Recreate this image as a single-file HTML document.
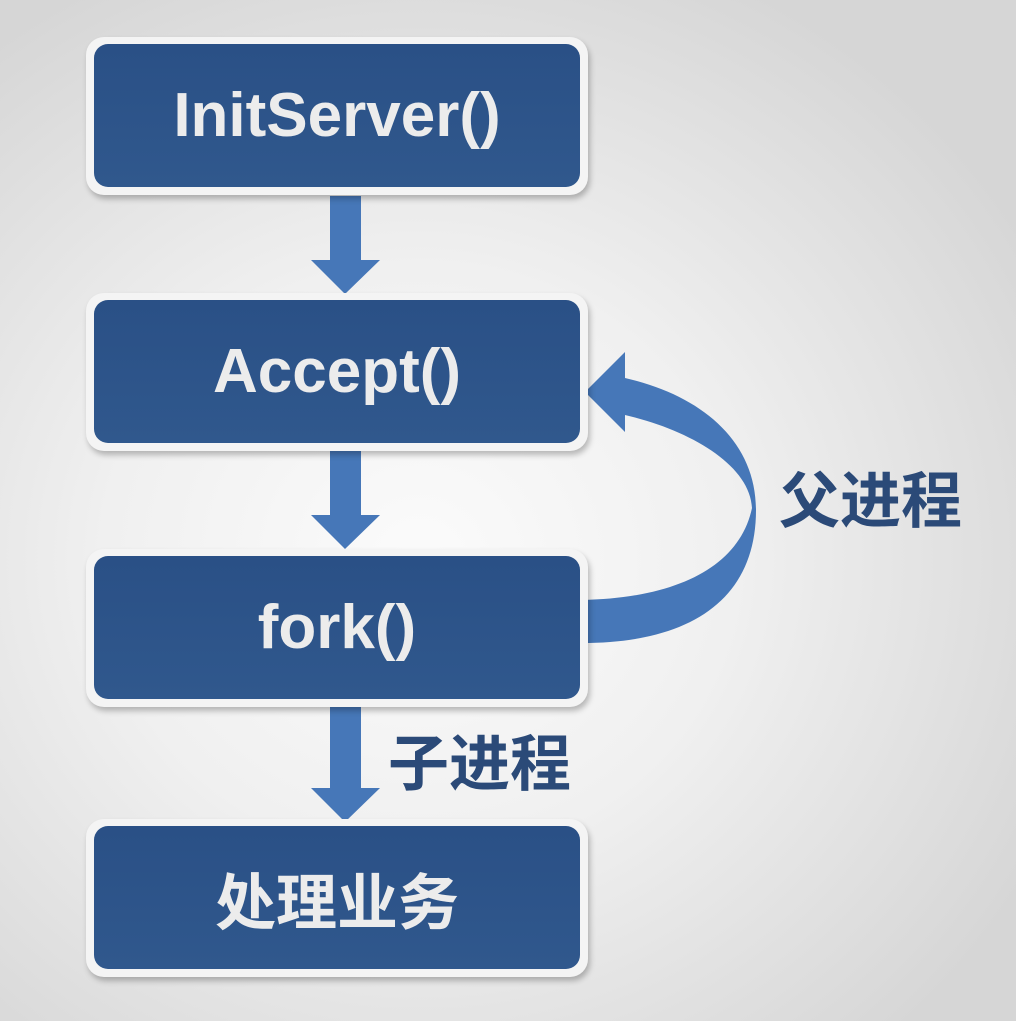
<!DOCTYPE html>
<html><head><meta charset="utf-8"><style>
html,body{margin:0;padding:0}
body{width:1016px;height:1021px;position:relative;overflow:hidden;
background:radial-gradient(ellipse 700px 650px at 420px 560px,#fbfbfb 0%,#f0f0f0 45%,#d6d6d6 100%);
font-family:"Liberation Sans","Noto Sans CJK SC",sans-serif}
.box{position:absolute;left:86px;width:502px;height:158px;border-radius:18px;background:#f4f4f4;
box-shadow:2px 4px 6px rgba(0,0,0,0.25)}
.box div{position:absolute;left:8px;top:7px;right:8px;bottom:8px;border-radius:14px;
background:linear-gradient(#2a5086,#30588d);color:#ececec;font-weight:bold;font-size:62px;
display:flex;align-items:center;justify-content:center;letter-spacing:0}
.lbl{position:absolute;color:#2b4a78;font-weight:bold;font-size:61px;font-family:"Noto Sans CJK SC",sans-serif;line-height:1}
svg{position:absolute;left:0;top:0}
</style></head><body>
<svg width="1016" height="1021">
<g fill="#4677b8">
<rect x="330" y="196" width="31" height="64"/><polygon points="311,260 380,260 345,294"/>
<rect x="330" y="448" width="31" height="67"/><polygon points="311,515 380,515 345,549"/>
<rect x="330" y="705" width="31" height="83"/><polygon points="311,788 380,788 345,822"/>
<path d="M582,643 C690,643 756,600 756,510 C756,440 700,395 625,378 L625,352 L585,392 L625,432 L625,415 C690,430 750,465 752,508 C740,565 680,598 582,600 Z"/>
</g>
</svg>
<div class="box" style="top:37px"><div>InitServer()</div></div>
<div class="box" style="top:293px"><div>Accept()</div></div>
<div class="box" style="top:549px"><div>fork()</div></div>
<div class="box" style="top:819px"><div style="font-family:'Noto Sans CJK SC',sans-serif;font-size:61px">处理业务</div></div>
<div class="lbl" style="left:779px;top:465px">父进程</div>
<div class="lbl" style="left:388px;top:728px">子进程</div>
</body></html>
